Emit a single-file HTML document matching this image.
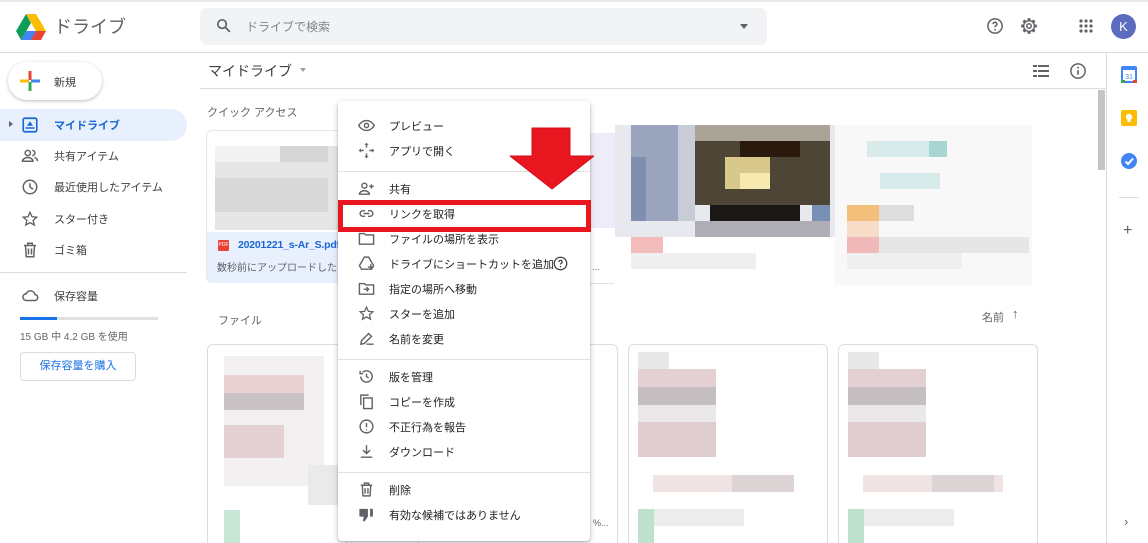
<!DOCTYPE html>
<html><head><meta charset="utf-8"><style>
*{box-sizing:border-box;margin:0;padding:0}
html,body{width:1148px;height:543px;overflow:hidden}
body{background:#fff;font-family:"Liberation Sans","Noto Sans CJK JP",sans-serif;color:#3c4043;position:relative;font-size:11px}
.a{position:absolute}
.mi{position:absolute;left:0;width:252px;height:25px;display:flex;align-items:center;font-size:11px;color:#202124}
.mi svg{position:absolute;left:20px;width:17px;height:17px}
.mi span{position:absolute;left:51px}
.nav{position:absolute;left:0;width:187px;height:31px;display:flex;align-items:center;font-size:11px}
.nav svg{position:absolute;left:21px;width:18px;height:18px}
.nav span{position:absolute;left:54px}
.b{position:absolute}
</style></head><body>
<!-- header -->
<div class="a" style="left:0;top:0;width:1148px;height:2px;background:#e8e8e8"></div>
<svg class="a" style="left:16px;top:14px" width="30" height="26" viewBox="0 0 30 26"><path d="M10 0h10l10 17h-10z" fill="#fbbc04"/><path d="M10 0L0 17l5 9 10-17z" fill="#0f9d58"/><path d="M15 17h15l-5 9h-15z" fill="#ea4335"/><path d="M5 26l5-9h10l-5 9z" fill="#4285f4"/></svg>
<div class="a" style="left:54px;top:13px;font-size:18px;color:#5f6368">ドライブ</div>
<div class="a" style="left:200px;top:8px;width:567px;height:37px;background:#f1f3f4;border-radius:7px"></div>
<svg class="a" style="left:215px;top:17px" width="17" height="17" viewBox="0 0 24 24"><circle cx="10" cy="10" r="6" fill="none" stroke="#5f6368" stroke-width="2.4"/><path d="M14.5 14.5L21 21" stroke="#5f6368" stroke-width="2.6"/></svg>
<div class="a" style="left:246px;top:18px;font-size:12px;color:#80868b">ドライブで検索</div>
<div class="a" style="left:740px;top:24px;border:4px solid transparent;border-top:5px solid #5f6368"></div>
<svg class="a" style="left:986px;top:17px" width="18" height="18" viewBox="0 0 24 24"><circle cx="12" cy="12" r="9.5" fill="none" stroke="#5f6368" stroke-width="2"/><path d="M9.5 9.5a2.5 2.5 0 1 1 3.5 2.3c-.8.4-1 1-1 1.8" fill="none" stroke="#5f6368" stroke-width="2"/><circle cx="12" cy="17" r="1.2" fill="#5f6368"/></svg>
<svg class="a" style="left:1020px;top:17px" width="18" height="18" viewBox="0 0 24 24"><g fill="#5f6368"><rect x="10" y="1.5" width="4" height="21" rx="1"/><rect x="10" y="1.5" width="4" height="21" rx="1" transform="rotate(45 12 12)"/><rect x="10" y="1.5" width="4" height="21" rx="1" transform="rotate(90 12 12)"/><rect x="10" y="1.5" width="4" height="21" rx="1" transform="rotate(135 12 12)"/><circle cx="12" cy="12" r="8"/></g><circle cx="12" cy="12" r="6.2" fill="#fff"/><circle cx="12" cy="12" r="3" fill="none" stroke="#5f6368" stroke-width="2"/></svg>
<svg class="a" style="left:1079px;top:19px" width="14" height="14" viewBox="0 0 14 14" fill="#5f6368"><circle cx="2" cy="2" r="1.6"/><circle cx="7" cy="2" r="1.6"/><circle cx="12" cy="2" r="1.6"/><circle cx="2" cy="7" r="1.6"/><circle cx="7" cy="7" r="1.6"/><circle cx="12" cy="7" r="1.6"/><circle cx="2" cy="12" r="1.6"/><circle cx="7" cy="12" r="1.6"/><circle cx="12" cy="12" r="1.6"/></svg>
<div class="a" style="left:1111px;top:14px;width:25px;height:25px;border-radius:50%;background:#5c6bc0;color:#fff;font-size:13px;text-align:center;line-height:25px">K</div>
<div class="a" style="left:0;top:52px;width:1148px;height:1px;background:#dadce0"></div>
<!-- sidebar -->
<div class="a" style="left:8px;top:62px;width:94px;height:38px;border-radius:19px;background:#fff;box-shadow:0 1px 3px rgba(60,64,67,.35)"></div>
<svg class="a" style="left:20px;top:71px" width="20" height="20" viewBox="0 0 20 20"><rect x="8.5" y="0" width="3" height="9" fill="#ea4335"/><rect x="11" y="8.5" width="9" height="3" fill="#4285f4"/><rect x="8.5" y="11" width="3" height="9" fill="#34a853"/><rect x="0" y="8.5" width="9" height="3" fill="#fbbc04"/></svg>
<div class="a" style="left:54px;top:74px;font-size:11px;color:#3c4043">新規</div>
<div class="a" style="left:0;top:109px;width:187px;height:32px;background:#e8f0fe;border-radius:0 16px 16px 0"></div>
<div class="a" style="left:9px;top:121px;border:3px solid transparent;border-left:4px solid #5f6368"></div>
<div class="nav" style="top:109px;color:#1967d2;font-weight:bold"><svg viewBox="0 0 24 24"><rect x="3" y="3" width="18" height="18" rx="2" fill="none" stroke="#1967d2" stroke-width="2.2"/><path d="M8 13l4-6 4 6z" fill="#1967d2"/><path d="M6 16h12" stroke="#1967d2" stroke-width="2"/></svg><span>マイドライブ</span></div>
<div class="nav" style="top:140px"><svg viewBox="0 0 24 24" fill="none" stroke="#5f6368" stroke-width="2"><circle cx="9" cy="8" r="3.5"/><path d="M2 19c0-3 4-5 7-5s7 2 7 5z"/><path d="M15 4.5a3.5 3.5 0 0 1 0 7M18 14c2 .5 4 2 4 5"/></svg><span>共有アイテム</span></div>
<div class="nav" style="top:171px"><svg viewBox="0 0 24 24" fill="none" stroke="#5f6368" stroke-width="2"><circle cx="12" cy="12" r="9"/><path d="M12 7v5l4 3"/></svg><span>最近使用したアイテム</span></div>
<div class="nav" style="top:203px"><svg viewBox="0 0 24 24" fill="none" stroke="#5f6368" stroke-width="1.8"><path d="M12 3l2.7 6 6.3.6-4.8 4.2 1.5 6.2L12 16.8 6.3 20l1.5-6.2L3 9.6 9.3 9z"/></svg><span>スター付き</span></div>
<div class="nav" style="top:234px"><svg viewBox="0 0 24 24" fill="none" stroke="#5f6368" stroke-width="2"><path d="M4 6h16M9 6V3h6v3M6 6l1 15h10l1-15M10 10v8M14 10v8"/></svg><span>ゴミ箱</span></div>
<div class="a" style="left:0;top:272px;width:187px;height:1px;background:#dadce0"></div>
<div class="nav" style="top:280px"><svg viewBox="0 0 24 24" fill="none" stroke="#5f6368" stroke-width="2"><path d="M7 18h11a4 4 0 0 0 .5-8A6 6 0 0 0 7 9a4.5 4.5 0 0 0 0 9z"/></svg><span>保存容量</span></div>
<div class="a" style="left:20px;top:317px;width:138px;height:3px;background:#e0e0e0"></div>
<div class="a" style="left:20px;top:317px;width:37px;height:3px;background:#1a73e8"></div>
<div class="a" style="left:20px;top:328px;font-size:10px;color:#5f6368">15 GB 中 4.2 GB を使用</div>
<div class="a" style="left:20px;top:352px;width:116px;height:29px;border:1px solid #dadce0;border-radius:4px;color:#1a73e8;font-size:11px;text-align:center;line-height:27px">保存容量を購入</div>
<!-- main header -->
<div class="a" style="left:208px;top:61px;font-size:14px;color:#3c4043">マイドライブ</div>
<div class="a" style="left:300px;top:68px;border:3px solid transparent;border-top:4px solid #9aa0a6"></div>
<svg class="a" style="left:1033px;top:64px" width="16" height="14" viewBox="0 0 16 14" fill="#5f6368"><rect x="0" y="1" width="16" height="2"/><rect x="0" y="6" width="16" height="2"/><rect x="0" y="11" width="16" height="2"/><rect x="4" y="0" width="1" height="14" fill="#fff"/></svg>
<svg class="a" style="left:1069px;top:62px" width="18" height="18" viewBox="0 0 24 24"><circle cx="12" cy="12" r="9.5" fill="none" stroke="#5f6368" stroke-width="2"/><path d="M12 11v6" stroke="#5f6368" stroke-width="2.2"/><circle cx="12" cy="7.5" r="1.3" fill="#5f6368"/></svg>
<div class="a" style="left:200px;top:88px;width:907px;height:1px;background:#dadce0"></div>
<div class="a" style="left:207px;top:104px;font-size:11px;color:#5f6368">クイック アクセス</div>
<!-- quick access card 1 -->
<div class="a" style="left:206px;top:130px;width:140px;height:153px;border:1px solid #e3e6ea;border-radius:6px;background:#fff"></div>
<div class="b" style="left:215px;top:146px;width:123px;height:84px;background:#e6e6e6"></div>
<div class="b" style="left:280px;top:146px;width:48px;height:16px;background:#d6d6d6"></div>
<div class="b" style="left:215px;top:146px;width:65px;height:16px;background:#f2f2f2"></div>
<div class="b" style="left:215px;top:178px;width:113px;height:34px;background:#d8d8d8"></div>
<div class="a" style="left:207px;top:232px;width:138px;height:51px;background:#e8f0fe;border-radius:0 0 6px 6px"></div>
<div class="a" style="left:218px;top:240px;width:11px;height:11px;background:#e94235;border-radius:1px;color:#fff;font-size:5px;line-height:11px;text-align:center">PDF</div>
<div class="a" style="left:238px;top:239px;font-size:10.5px;color:#1967d2;font-weight:bold;white-space:nowrap;letter-spacing:-.2px">20201221_s-Ar_S.pdf</div>
<div class="a" style="left:217px;top:259px;font-size:10px;color:#5f6368;white-space:nowrap">数秒前にアップロードしたフ</div>
<!-- card 2 lavender -->
<div class="b" style="left:590px;top:133px;width:25px;height:95px;background:#eeecf8"></div>
<div class="a" style="left:590px;top:283px;width:24px;height:1px;background:#e0e0e0"></div>
<!-- photo mosaic -->
<div class="b" style="left:615px;top:125px;width:220px;height:112px;background:#e8e9ee"></div>
<div class="b" style="left:631px;top:125px;width:64px;height:96px;background:#9aa4bc"></div>
<div class="b" style="left:631px;top:157px;width:15px;height:64px;background:#7f8fb0"></div>
<div class="b" style="left:678px;top:125px;width:17px;height:96px;background:#c8ccd6"></div>
<div class="b" style="left:695px;top:125px;width:135px;height:16px;background:#aaa498"></div>
<div class="b" style="left:695px;top:141px;width:135px;height:64px;background:#4d4536"></div>
<div class="b" style="left:740px;top:141px;width:60px;height:16px;background:#2a1a0d"></div>
<div class="b" style="left:725px;top:157px;width:45px;height:32px;background:#d9c88c"></div>
<div class="b" style="left:740px;top:173px;width:30px;height:16px;background:#f7eab0"></div>
<div class="b" style="left:710px;top:205px;width:90px;height:16px;background:#1a1714"></div>
<div class="b" style="left:812px;top:205px;width:18px;height:16px;background:#7890b4"></div>
<div class="b" style="left:695px;top:221px;width:135px;height:16px;background:#aeaeb4"></div>
<div class="b" style="left:631px;top:237px;width:32px;height:16px;background:#f2bcbc"></div>
<div class="b" style="left:631px;top:253px;width:125px;height:16px;background:#efeff0"></div>
<!-- card 3 -->
<div class="b" style="left:835px;top:125px;width:197px;height:160px;background:#f8f8f9"></div>
<div class="b" style="left:867px;top:141px;width:80px;height:16px;background:#d8ebea"></div>
<div class="b" style="left:929px;top:141px;width:18px;height:16px;background:#a9d5d2"></div>
<div class="b" style="left:880px;top:173px;width:60px;height:16px;background:#d6ebea"></div>
<div class="b" style="left:847px;top:205px;width:32px;height:16px;background:#f2c07a"></div>
<div class="b" style="left:879px;top:205px;width:35px;height:16px;background:#dedede"></div>
<div class="b" style="left:847px;top:221px;width:32px;height:16px;background:#f7dcc8"></div>
<div class="b" style="left:847px;top:237px;width:32px;height:16px;background:#f0b8b8"></div>
<div class="b" style="left:879px;top:237px;width:150px;height:16px;background:#e6e6e6"></div>
<div class="b" style="left:847px;top:253px;width:115px;height:16px;background:#efefef"></div>
<!-- files -->
<div class="a" style="left:218px;top:312px;font-size:11px;color:#5f6368">ファイル</div>
<div class="a" style="left:982px;top:309px;font-size:11px;color:#5f6368">名前</div>
<div class="a" style="left:1012px;top:306px;font-size:13px;color:#5f6368">↑</div>
<div class="a" style="left:207px;top:344px;width:140px;height:210px;border:1px solid #dadce0;border-radius:6px"></div>
<div class="a" style="left:418px;top:344px;width:200px;height:210px;border:1px solid #dadce0;border-radius:6px"></div>
<div class="a" style="left:628px;top:344px;width:200px;height:210px;border:1px solid #dadce0;border-radius:6px"></div>
<div class="a" style="left:838px;top:344px;width:200px;height:210px;border:1px solid #dadce0;border-radius:6px"></div>
<!-- file mosaics -->
<div class="b" style="left:224px;top:356px;width:100px;height:130px;background:#f3f0f1"></div>
<div class="b" style="left:224px;top:375px;width:80px;height:18px;background:#e8d2d4"></div>
<div class="b" style="left:224px;top:393px;width:80px;height:17px;background:#c8c2c4"></div>
<div class="b" style="left:224px;top:425px;width:60px;height:33px;background:#e5d0d4"></div>
<div class="b" style="left:224px;top:510px;width:16px;height:33px;background:#c7e6d6"></div>
<div class="b" style="left:308px;top:465px;width:30px;height:40px;background:#eaeaea"></div>
<div class="b" style="left:638px;top:352px;width:31px;height:17px;background:#e8e8e8"></div>
<div class="b" style="left:638px;top:369px;width:78px;height:18px;background:#e4cfd2"></div>
<div class="b" style="left:638px;top:387px;width:78px;height:18px;background:#c4bec0"></div>
<div class="b" style="left:638px;top:405px;width:78px;height:17px;background:#ebe8e9"></div>
<div class="b" style="left:638px;top:422px;width:78px;height:35px;background:#dfcdd0"></div>
<div class="b" style="left:653px;top:475px;width:140px;height:17px;background:#efe3e4"></div>
<div class="b" style="left:732px;top:475px;width:62px;height:17px;background:#ddd4d6"></div>
<div class="b" style="left:638px;top:509px;width:16px;height:34px;background:#bfe2cf"></div>
<div class="b" style="left:654px;top:509px;width:90px;height:17px;background:#ececec"></div>
<div class="b" style="left:848px;top:352px;width:31px;height:17px;background:#e8e8e8"></div>
<div class="b" style="left:848px;top:369px;width:78px;height:18px;background:#e4cfd2"></div>
<div class="b" style="left:848px;top:387px;width:78px;height:18px;background:#c4bec0"></div>
<div class="b" style="left:848px;top:405px;width:78px;height:17px;background:#ebe8e9"></div>
<div class="b" style="left:848px;top:422px;width:78px;height:35px;background:#dfcdd0"></div>
<div class="b" style="left:863px;top:475px;width:140px;height:17px;background:#efe3e4"></div>
<div class="b" style="left:932px;top:475px;width:62px;height:17px;background:#ddd4d6"></div>
<div class="b" style="left:848px;top:509px;width:16px;height:34px;background:#bfe2cf"></div>
<div class="b" style="left:864px;top:509px;width:90px;height:17px;background:#ececec"></div>
<div class="a" style="left:593px;top:518px;font-size:9px;color:#5f6368">%...</div>
<div class="a" style="left:592px;top:262px;font-size:9px;color:#5f6368">...</div>
<!-- scrollbar + right panel -->
<div class="a" style="left:1098px;top:90px;width:7px;height:80px;background:#c4c4c4"></div>
<div class="a" style="left:1106px;top:53px;width:1px;height:490px;background:#dadce0"></div>
<svg class="a" style="left:1121px;top:66px" width="16" height="17" viewBox="0 0 16 17"><rect x="0" y="0" width="16" height="17" rx="2" fill="#4285f4"/><rect x="2" y="4" width="12" height="11" fill="#fff"/><text x="8" y="13" font-size="7" text-anchor="middle" fill="#4285f4" font-family="Liberation Sans">31</text><rect x="0" y="14" width="4" height="3" fill="#34a853"/><rect x="12" y="14" width="4" height="3" fill="#ea4335"/></svg>
<svg class="a" style="left:1121px;top:110px" width="16" height="16" viewBox="0 0 16 16"><rect width="16" height="16" rx="2" fill="#fbbc04"/><circle cx="8" cy="7" r="3.2" fill="#fff"/><rect x="6.5" y="10" width="3" height="2" fill="#fff"/></svg>
<svg class="a" style="left:1121px;top:153px" width="16" height="16" viewBox="0 0 16 16"><circle cx="8" cy="8" r="8" fill="#4285f4"/><path d="M4.5 8.5l2.5 2.5 5-5.5" fill="none" stroke="#fff" stroke-width="2"/></svg>
<div class="a" style="left:1119px;top:197px;width:20px;height:1px;background:#dadce0"></div>
<div class="a" style="left:1123px;top:222px;font-size:16px;color:#5f6368">+</div>
<div class="a" style="left:1124px;top:514px;font-size:13px;color:#5f6368">›</div>
<!-- context menu -->
<div class="a" style="left:338px;top:101px;width:252px;height:440px;background:#fff;border-radius:4px;box-shadow:0 2px 6px rgba(60,64,67,.3),0 1px 2px rgba(60,64,67,.2)">
<div class="mi" style="top:12px"><svg viewBox="0 0 24 24" fill="none" stroke="#5f6368" stroke-width="2"><path d="M1 12s4-7 11-7 11 7 11 7-4 7-11 7S1 12 1 12z"/><circle cx="12" cy="12" r="3"/></svg><span>プレビュー</span></div>
<div class="mi" style="top:37px"><svg viewBox="0 0 24 24" fill="#5f6368"><path d="M12 1l3 3h-2v4h-2V4H9zM12 23l-3-3h2v-4h2v4h2zM1 12l3-3v2h4v2H4v2zM23 12l-3 3v-2h-4v-2h4V9z"/></svg><span>アプリで開く</span></div>
<div class="a" style="left:0;top:70px;width:252px;height:1px;background:#e0e0e0"></div>
<div class="mi" style="top:75px"><svg viewBox="0 0 24 24" fill="none" stroke="#5f6368" stroke-width="2"><circle cx="9" cy="8" r="3.5"/><path d="M2 20c0-3 4-5 7-5s7 2 7 5z"/><path d="M19 6v6M16 9h6"/></svg><span>共有</span></div>
<div class="mi" style="top:100px"><svg viewBox="0 0 24 24" fill="none" stroke="#5f6368" stroke-width="2"><path d="M10 8H7a4 4 0 0 0 0 8h3M14 8h3a4 4 0 0 1 0 8h-3M8 12h8"/></svg><span>リンクを取得</span></div>
<div class="mi" style="top:125px"><svg viewBox="0 0 24 24" fill="none" stroke="#5f6368" stroke-width="2"><path d="M2 5h7l2 2h11v13H2z"/></svg><span>ファイルの場所を表示</span></div>
<div class="mi" style="top:150px"><svg viewBox="0 0 24 24" fill="none" stroke="#5f6368" stroke-width="2"><path d="M9 3h6l7 12-3 5H5l-3-5z"/><path d="M18 13v8M14 17h8"/></svg><span>ドライブにショートカットを追加</span><svg style="left:215px;width:15px;height:15px" viewBox="0 0 24 24"><circle cx="12" cy="12" r="10" fill="none" stroke="#3c4043" stroke-width="2"/><path d="M9.5 9.5a2.5 2.5 0 1 1 3.5 2.3c-.8.4-1 1-1 1.8" fill="none" stroke="#3c4043" stroke-width="2"/><circle cx="12" cy="17" r="1.2" fill="#3c4043"/></svg></div>
<div class="mi" style="top:175px"><svg viewBox="0 0 24 24" fill="none" stroke="#5f6368" stroke-width="2"><path d="M2 5h7l2 2h11v13H2z"/><path d="M8 13h7M12 10l3 3-3 3"/></svg><span>指定の場所へ移動</span></div>
<div class="mi" style="top:200px"><svg viewBox="0 0 24 24" fill="none" stroke="#5f6368" stroke-width="1.8"><path d="M12 3l2.7 6 6.3.6-4.8 4.2 1.5 6.2L12 16.8 6.3 20l1.5-6.2L3 9.6 9.3 9z"/></svg><span>スターを追加</span></div>
<div class="mi" style="top:225px"><svg viewBox="0 0 24 24" fill="none" stroke="#5f6368" stroke-width="2"><path d="M4 20l1-5L15 5l4 4L9 19zM12 20h10"/></svg><span>名前を変更</span></div>
<div class="a" style="left:0;top:258px;width:252px;height:1px;background:#e0e0e0"></div>
<div class="mi" style="top:263px"><svg viewBox="0 0 24 24" fill="none" stroke="#5f6368" stroke-width="2"><path d="M4 12a8 8 0 1 0 2.5-5.8M3 4v4h4M12 8v4l3 2"/></svg><span>版を管理</span></div>
<div class="mi" style="top:288px"><svg viewBox="0 0 24 24" fill="none" stroke="#5f6368" stroke-width="2"><path d="M4 17V3h11"/><rect x="8" y="7" width="12" height="15"/></svg><span>コピーを作成</span></div>
<div class="mi" style="top:313px"><svg viewBox="0 0 24 24" fill="none" stroke="#5f6368" stroke-width="2"><circle cx="12" cy="12" r="9"/><path d="M12 7v6M12 16v1.5"/></svg><span>不正行為を報告</span></div>
<div class="mi" style="top:338px"><svg viewBox="0 0 24 24" fill="none" stroke="#5f6368" stroke-width="2"><path d="M12 3v12M7 10l5 5 5-5M4 20h16"/></svg><span>ダウンロード</span></div>
<div class="a" style="left:0;top:371px;width:252px;height:1px;background:#e0e0e0"></div>
<div class="mi" style="top:376px"><svg viewBox="0 0 24 24" fill="none" stroke="#5f6368" stroke-width="2"><path d="M4 6h16M9 6V3h6v3M6 6l1 15h10l1-15M10 10v8M14 10v8"/></svg><span>削除</span></div>
<div class="mi" style="top:401px"><svg viewBox="0 0 24 24" fill="#5f6368"><path d="M2 4h12v11l-5 7-2-1 1-6H2zM17 4h4v11h-4z"/></svg><span>有効な候補ではありません</span></div>
</div>
<!-- red highlight -->
<div class="a" style="left:338px;top:200px;width:253px;height:32px;border:5px solid #e8161f"></div>
<!-- red arrow -->
<svg class="a" style="left:508px;top:126px" width="86" height="64" viewBox="0 0 86 64"><path d="M24 2h38v28h24L44 63 2 30h22z" fill="#e8161f" stroke="#d0101a" stroke-width="1" stroke-linejoin="round"/></svg>
</body></html>
